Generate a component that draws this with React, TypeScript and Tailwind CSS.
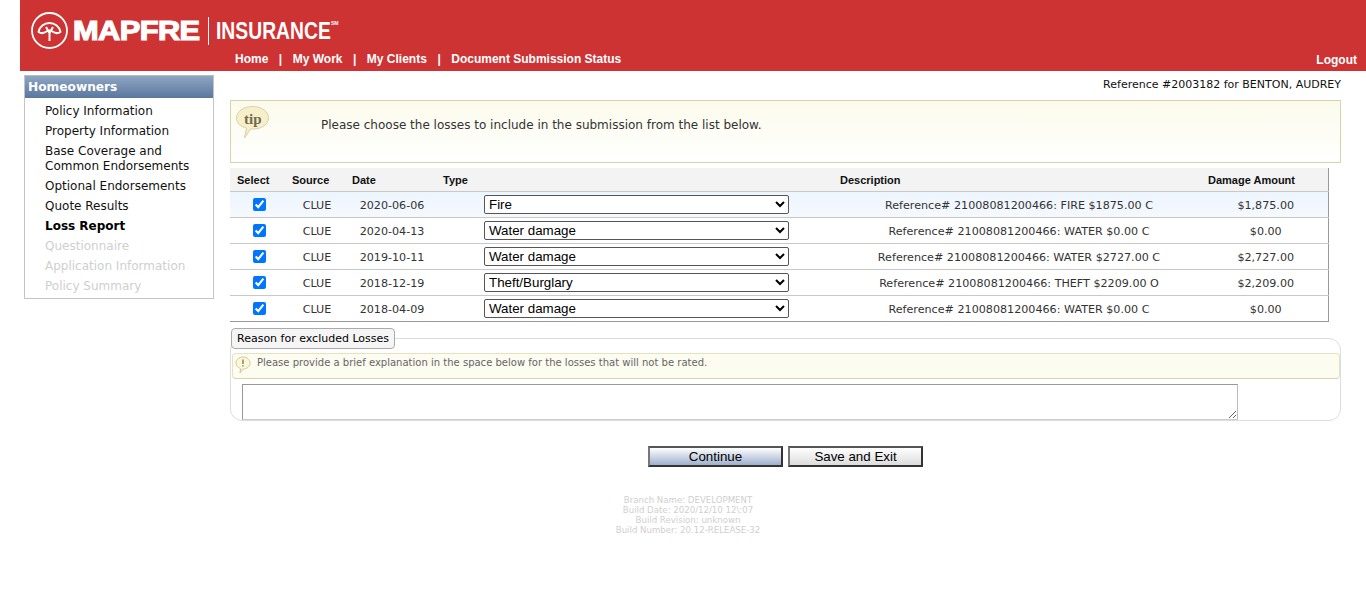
const navLinks = ["Home", "My Work", "My Clients", "Document Submission Status"];

const sideItems = [
  { label: "Policy Information" },
  { label: "Property Information" },
  { label: "Base Coverage and\nCommon Endorsements" },
  { label: "Optional Endorsements" },
  { label: "Quote Results" },
  { label: "Loss Report", active: true },
  { label: "Questionnaire", disabled: true },
  { label: "Application Information", disabled: true },
  { label: "Policy Summary", disabled: true },
];

const lossTypes = ["Fire", "Water damage", "Theft/Burglary"];

const losses = [
  { date: "2020-06-06", type: "Fire", desc: "Reference# 21008081200466: FIRE $1875.00 C", amount: "$1,875.00" },
  { date: "2020-04-13", type: "Water damage", desc: "Reference# 21008081200466: WATER $0.00 C", amount: "$0.00" },
  { date: "2019-10-11", type: "Water damage", desc: "Reference# 21008081200466: WATER $2727.00 C", amount: "$2,727.00" },
  { date: "2018-12-19", type: "Theft/Burglary", desc: "Reference# 21008081200466: THEFT $2209.00 O", amount: "$2,209.00" },
  { date: "2018-04-09", type: "Water damage", desc: "Reference# 21008081200466: WATER $0.00 C", amount: "$0.00" },
];

function Logo() {
  return (
    <div className="flex items-center">
      <svg width="38" height="38" viewBox="0 0 38 38" fill="none" stroke="#fff" className="shrink-0">
        <circle cx="18.500" cy="18.500" r="17.500" strokeWidth="1.800" />
        <path
          d="M7.500 20C8.500 14.500 13 11 18.500 11s10 3.500 11 9c-2.500 1.500-6 1-8-.5-1-.7-2-1-3-1s-2 .3-3 1c-2 1.500-5.500 2-8 .5z"
          strokeWidth="2"
          strokeLinejoin="round"
        />
        <path d="M18.500 19v10M15 15l3.500 6 3.500-6" strokeWidth="2" />
      </svg>
      <span className="ml-[4px] block w-[127px] origin-left scale-x-[1.14] whitespace-nowrap font-['Liberation_Sans',sans-serif] text-[27px] font-bold leading-none tracking-[-0.5px] text-white [-webkit-text-stroke:1.2px_#fff]">
        MAPFRE
      </span>
      <span className="ml-[8px] h-[28px] w-px bg-white" />
      <span className="ml-[7px] block w-[115px] origin-left scale-x-[0.84] whitespace-nowrap font-['Liberation_Sans',sans-serif] text-[23px] font-bold leading-none text-white">
        INSURANCE
      </span>
      <span className="mb-[14px] font-['Liberation_Sans',sans-serif] text-[5px] font-bold text-white">SM</span>
    </div>
  );
}

function Header() {
  return (
    <header className="ml-5 flex h-[71px] flex-col bg-[#cd3333] pl-[11px] pr-[9px]">
      <div className="pt-3">
        <Logo />
      </div>
      <div className="flex justify-between font-['Liberation_Sans',sans-serif] text-xs font-bold leading-[18px] text-white">
        <nav className="ml-[204px] flex">
          {navLinks.map((link, i) => (
            <span key={link} className="flex">
              {i > 0 && <span className="mx-[10.5px]">|</span>}
              <span>{link}</span>
            </span>
          ))}
        </nav>
        <span className="mt-px">Logout</span>
      </div>
    </header>
  );
}

function Sidebar() {
  return (
    <aside className="ml-6 mt-1 h-[224px] w-[190px] shrink-0 border border-[#c4c4c4] border-t-[#b5bcc8]">
      <div className="h-[22px] bg-gradient-to-b from-[#8fa6c4] to-[#5a779d] pl-[3px] text-[12.2px] font-bold leading-[23px] text-white">
        Homeowners
      </div>
      <ul className="pl-5 pt-[6px] text-xs leading-[15px]">
        {sideItems.map((item) => (
          <li
            key={item.label}
            className={`mb-[5px] whitespace-pre-line ${item.active ? "font-bold text-black" : item.disabled ? "text-[#cfcfcf]" : "text-[#111]"}`}
          >
            {item.label}
          </li>
        ))}
      </ul>
    </aside>
  );
}

function TipBox() {
  return (
    <div className="flex h-[63px] border border-[#d8d3ab] bg-gradient-to-b from-[#fbfbec] to-white pl-[5px] pt-[5px]">
      <div className="relative h-[33px] w-[33px] shrink-0">
        <svg width="33" height="33" viewBox="0 0 33 33" className="absolute left-0 top-0">
          <path d="M16.500 .5c9 0 16 5 16 11.500s-7 11-15 11c-1 0-2 0-3 0l-6 9 2-10C5 21 .5 17 .5 12 .5 5.500 7.500 .5 16.500 .5z" fill="#f7efca" stroke="#d8d0a8" />
        </svg>
        <span className="absolute left-[8px] top-[3px] font-['Liberation_Serif',serif] text-[15px] font-bold leading-[20px] text-[#6f6a50]">
          tip
        </span>
      </div>
      <p className="ml-[52px] mt-[11px] text-xs leading-[16px] text-[#333]">
        Please choose the losses to include in the submission from the list below.
      </p>
    </div>
  );
}

function LossTable() {
  return (
    <table className="mt-[5px] w-[1098px] table-fixed border-r border-b border-[#999] text-[11.15px]">
      <colgroup>
        <col className="w-[58px]" />
        <col className="w-[56px]" />
        <col className="w-[96px]" />
        <col className="w-[397px]" />
        <col className="w-[364px]" />
        <col className="w-[127px]" />
      </colgroup>
      <thead>
        <tr className="h-[23px] bg-[#f3f3f3] font-['Liberation_Sans',sans-serif] text-[11px] font-bold leading-none text-[#111]">
          <th className="pl-[7px] pt-[2px] text-left font-bold">Select</th>
          <th className="pl-[4px] pt-[2px] text-left font-bold">Source</th>
          <th className="pl-[8px] pt-[2px] text-left font-bold">Date</th>
          <th className="pl-[3px] pt-[2px] text-left font-bold">Type</th>
          <th className="pl-[3px] pt-[2px] text-left font-bold">Description</th>
          <th className="pl-[7px] pt-[2px] text-left font-bold">Damage Amount</th>
        </tr>
      </thead>
      <tbody>
        {losses.map((loss, i) => (
          <tr key={loss.date} className={`h-[26px] border-t border-[#c8c8c8] text-[#333] ${i === 0 ? "bg-gradient-to-b from-[#edf5fd] to-[#f5f9fe]" : ""}`}>
            <td className="pl-[23px]">
              <input type="checkbox" defaultChecked className="block h-[13px] w-[13px]" />
            </td>
            <td className="pl-[2px] pt-[4px] text-center">CLUE</td>
            <td className="pt-[4px] text-center">{loss.date}</td>
            <td className="pl-[44px]">
              <select
                defaultValue={loss.type}
                className="block h-[19px] w-[305px] rounded-[2px] border border-[#555] bg-white font-['Liberation_Sans',sans-serif] text-[13.33px] leading-none text-black"
              >
                {lossTypes.map((t) => (
                  <option key={t}>{t}</option>
                ))}
              </select>
            </td>
            <td className="pt-[4px] text-center">{loss.desc}</td>
            <td className="pl-[3px] pt-[4px] text-center">{loss.amount}</td>
          </tr>
        ))}
      </tbody>
    </table>
  );
}

function ReasonPanel() {
  return (
    <div className="relative mt-[16px] h-[83px] w-[1111px] rounded-[12px] border border-[#ddd] pl-px pt-[14px]">
      <button className="absolute -top-[11px] left-0 h-[21px] rounded-[4px] border border-[#aaa] bg-[#f5f5f5] px-[5px] text-[11px] leading-none text-black">
        Reason for excluded Losses
      </button>
      <div className="flex h-[26px] w-[1108px] items-center rounded-[4px] border border-[#e6e2c0] border-b-[#d8d3ab] bg-[#fcfcf0] pl-[2px]">
        <svg width="16" height="18" viewBox="0 0 16 18" className="mb-[2px] shrink-0">
          <path d="M8 1c4 0 7 2.700 7 6s-3 6-7 6l-3 4 .6-4.400C3 11.500 1 9.500 1 7c0-3.300 3-6 7-6z" fill="#fbf7d8" stroke="#cfc9a0" />
          <path d="M8 3.500v4.500M8 9.300v1.300" stroke="#6b6440" strokeWidth="1.200" />
        </svg>
        <span className="mb-[4px] ml-[6px] text-[10.03px] leading-none text-[#666]">
          Please provide a brief explanation in the space below for the losses that will not be rated.
        </span>
      </div>
      <textarea className="ml-[10px] mt-[5px] block h-[36px] w-[996px] border border-[#999] border-r-[#bbb] border-b-[#ccc] bg-white" />
    </div>
  );
}

function Actions() {
  return (
    <div className="mt-[25px] flex justify-center gap-[5px] font-['Liberation_Sans',sans-serif] text-[13.33px] text-black">
      <button className="h-[21px] w-[135px] border-2 border-[#555] border-l-[#777] border-r-[#333] border-b-[#333] bg-gradient-to-b from-white to-[#9fb0cc] pt-px leading-none">
        Continue
      </button>
      <button className="h-[21px] w-[135px] border-2 border-[#555] border-l-[#777] border-r-[#333] border-b-[#333] bg-gradient-to-b from-white to-[#dcdcdc] pt-px leading-none">
        Save and Exit
      </button>
    </div>
  );
}

function BuildInfo() {
  return (
    <div className="mt-[28px] pr-[195px] text-center text-[8.6px] font-normal leading-[10px] text-[#cfcfcf]">
      <div>Branch Name: DEVELOPMENT</div>
      <div>Build Date: 2020/12/10 12\:07</div>
      <div>Build Revision: unknown</div>
      <div>Build Number: 20.12-RELEASE-32</div>
    </div>
  );
}

export default function App() {
  return (
    <div className="min-h-[613px] bg-white font-['DejaVu_Sans',sans-serif]">
      <Header />
      <div className="flex">
        <Sidebar />
        <main className="ml-4 w-[1111px]">
          <p className="h-[29px] text-right text-[11px] leading-[27px] text-[#111]">
            Reference #2003182 for BENTON, AUDREY
          </p>
          <TipBox />
          <LossTable />
          <ReasonPanel />
          <Actions />
          <BuildInfo />
        </main>
      </div>
    </div>
  );
}
